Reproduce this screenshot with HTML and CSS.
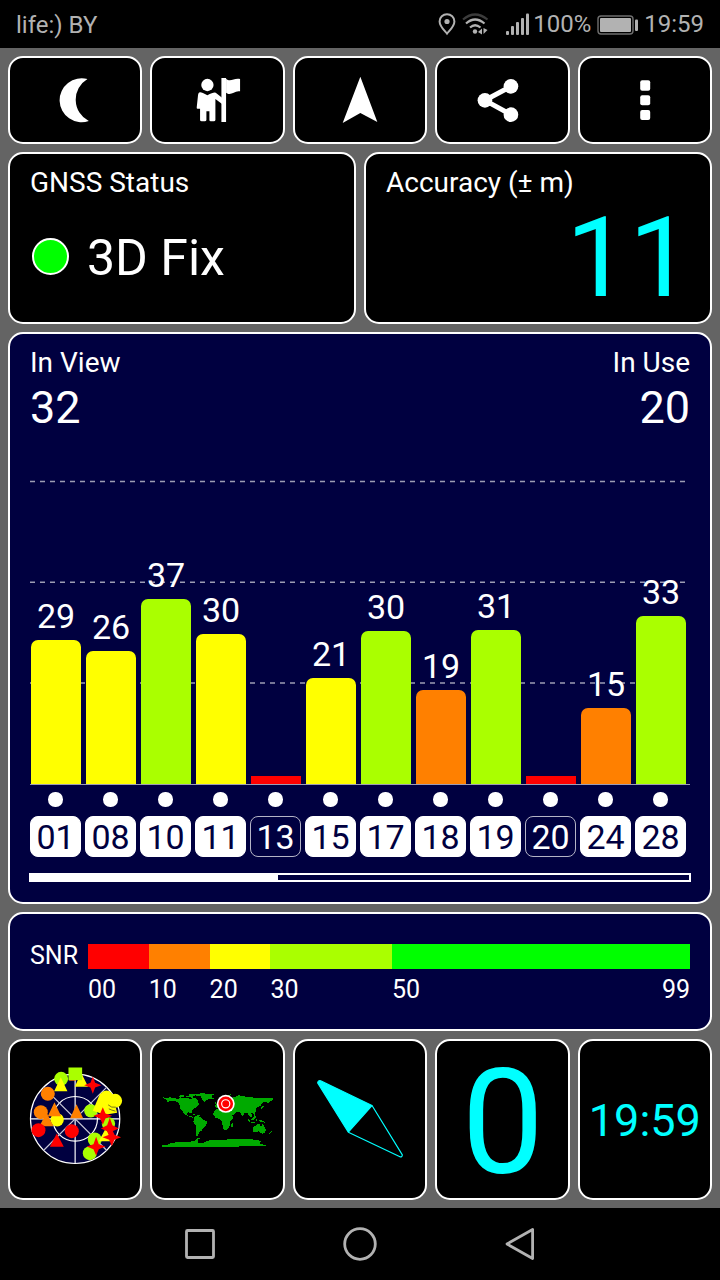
FILE: index.html
```
<!DOCTYPE html>
<html lang="en">

<head>
    <meta charset="UTF-8">
    <meta name="viewport" content="width=device-width, initial-scale=1.0">
    <title>GNSS Status</title>
    <link rel="stylesheet" href="styles.css">
</head>

<body>
    <!-- Status bar -->
    <header class="status-bar">
        <span class="carrier">life:) BY</span>
        <div class="status-icons">
            <svg class="icon-pin" viewBox="0 0 18 24">
                <path d="M9 2.2C5 2.2 1.6 5.2 1.6 9.4C1.6 14 5.5 17.5 9 21.6C12.5 17.5 16.4 14 16.4 9.4C16.4 5.2 13 2.2 9 2.2Z" fill="none" stroke="#b2b2b2" stroke-width="2" />
                <circle cx="9" cy="9.5" r="2.6" fill="#b2b2b2" />
            </svg>
            <svg class="icon-wifi" viewBox="0 0 27 24" fill="none" stroke-width="2.2">
                <path d="M1 7.5Q13 -2.5 25.5 7.5" stroke="#3c3c3c" />
                <path d="M4 11.5Q13 3.5 22.5 11.5" stroke="#b2b2b2" />
                <path d="M8 15.5Q13 11 18.5 15.5" stroke="#b2b2b2" />
                <circle cx="13" cy="19.5" r="2.2" fill="#b2b2b2" />
                <path d="M16 20l4-3.500v6M21.500 16v6l4-4z" fill="#b2b2b2" />
            </svg>
            <svg class="icon-signal" viewBox="0 0 24 24" fill="#b2b2b2">
                <rect x="0" y="18" width="3" height="4" rx="1" />
                <rect x="5" y="13" width="3" height="9" rx="1" />
                <rect x="10" y="9" width="3" height="13" rx="1" />
                <rect x="15" y="5" width="3" height="17" rx="1" />
                <rect x="20" y="0.5" width="3" height="21.5" rx="1" />
            </svg>
            <span class="battery-text">100%</span>
            <svg class="icon-battery" viewBox="0 0 42 20">
                <rect x="1" y="1" width="35" height="18" rx="3" fill="none" stroke="#6e6e6e" stroke-width="1.4" />
                <rect x="3" y="3" width="31" height="14" rx="1" fill="#b2b2b2" />
                <rect x="38" y="4.5" width="3" height="11.5" rx="1" fill="#b2b2b2" />
            </svg>
            <span class="clock">19:59</span>
        </div>
    </header>

    <main class="screen">
        <!-- Toolbar -->
        <nav class="row toolbar">
            <a class="card">
                <svg class="tool-icon" viewBox="133.6 209 180 180">
                    <path d="M261 236A66 66 0 1 0 265 362A72 72 0 0 1 261 236Z" />
                </svg>
            </a>
            <a class="card">
                <svg class="tool-icon" viewBox="562.8 210 180 180">
                    <circle cx="621" cy="255" r="18.500" />
                    <path d="M663 234H677V366H663Z" />
                    <path d="M677 236C690 248 702 232 719 237V274C702 270 692 290 677 278Z" />
                    <path d="M598 277Q602 275 621 286Q640 275 646 278L665 293V312L645 297V360Q645 364 640 364H631Q627 364 627 360V334H618V360Q618 364 613 364H604Q599 364 599 360V326H591Q588 326 589 322L593 284Q594 278 598 277Z" />
                </svg>
            </a>
            <a class="card">
                <svg class="tool-icon" viewBox="120 66 180 180">
                    <path d="M211 86L262 222L211 195L158 225Z" />
                </svg>
            </a>
            <a class="card">
                <svg class="tool-icon" viewBox="547.2 66 180 180">
                    <path d="M664 115L586 157L664 200" fill="none" stroke="#fff" stroke-width="15" />
                    <circle cx="586" cy="157" r="22" />
                    <circle cx="664" cy="115" r="22" />
                    <circle cx="664" cy="200" r="22" />
                </svg>
            </a>
            <a class="card">
                <svg class="tool-icon" viewBox="974.4 66 180 180">
                    <rect x="1050" y="97" width="30" height="31" rx="6" />
                    <rect x="1050" y="142" width="30" height="30" rx="6" />
                    <rect x="1050" y="186" width="30" height="30" rx="6" />
                </svg>
            </a>
        </nav>

        <!-- Fix and accuracy -->
        <section class="row summary">
            <div class="card">
                <h2 class="label">GNSS Status</h2>
                <div class="fix">
                    <span class="fix-light"></span>
                    <span class="fix-text">3D Fix</span>
                </div>
            </div>
            <div class="card">
                <h2 class="label">Accuracy (± m)</h2>
                <div class="accuracy">11</div>
            </div>
        </section>

        <!-- Satellite signal chart -->
        <section class="card satellites">
            <div class="counts">
                <div>
                    <h2 class="label">In View</h2>
                    <div class="count">32</div>
                </div>
                <div class="in-use">
                    <h2 class="label">In Use</h2>
                    <div class="count">20</div>
                </div>
            </div>
            <div class="chart">
                <svg class="grid-lines" viewBox="0 0 660 349" stroke="#9c9cb4" stroke-width="1.5" stroke-dasharray="5 5">
                    <path d="M0 46.4H656M0 147.200H656M0 248H656" />
                </svg>
                <div class="col"><span>29</span><div class="bar yellow" style="height: 144px"></div></div>
                <div class="col"><span>26</span><div class="bar yellow" style="height: 133px"></div></div>
                <div class="col"><span>37</span><div class="bar lime" style="height: 185px"></div></div>
                <div class="col"><span>30</span><div class="bar yellow" style="height: 150px"></div></div>
                <div class="col"><div class="bar none" style="height: 7.5px"></div></div>
                <div class="col"><span>21</span><div class="bar yellow" style="height: 106px"></div></div>
                <div class="col"><span>30</span><div class="bar lime" style="height: 153px"></div></div>
                <div class="col"><span>19</span><div class="bar orange" style="height: 94px"></div></div>
                <div class="col"><span>31</span><div class="bar lime" style="height: 154px"></div></div>
                <div class="col"><div class="bar none" style="height: 7.5px"></div></div>
                <div class="col"><span>15</span><div class="bar orange" style="height: 76px"></div></div>
                <div class="col"><span>33</span><div class="bar lime" style="height: 168px"></div></div>
            </div>
            <ul class="sat-ids">
                <li><b>01</b></li>
                <li><b>08</b></li>
                <li><b>10</b></li>
                <li><b>11</b></li>
                <li><b class="unused">13</b></li>
                <li><b>15</b></li>
                <li><b>17</b></li>
                <li><b>18</b></li>
                <li><b>19</b></li>
                <li><b class="unused">20</b></li>
                <li><b>24</b></li>
                <li><b>28</b></li>
            </ul>
            <div class="scroll-track"><div class="scroll-thumb"></div></div>
        </section>

        <!-- SNR legend -->
        <section class="card snr">
            <span class="snr-title">SNR</span>
            <div class="snr-scale">
                <i class="none"></i>
                <i class="orange"></i>
                <i class="yellow"></i>
                <i class="lime"></i>
                <i class="green"></i>
                <span>00</span>
                <span>10</span>
                <span>20</span>
                <span>30</span>
                <span class="last"><span>50</span><span>99</span></span>
            </div>
        </section>

        <!-- Page tiles -->
        <section class="row tiles">
            <a class="card">
                <svg width="110" height="110" viewBox="0.6 13.5 330 330">
                    <circle cx="166" cy="178" r="134" fill="#000040" />
                    <g fill="none" stroke="#fff" stroke-width="3.5">
                        <circle cx="166" cy="178" r="134" />
                        <circle cx="166" cy="178" r="67" />
                        <path d="M32 178H300M166 44V312" />
                        <path d="M71 83L261 273M261 83L71 273" stroke="#c8c8d8" />
                    </g>
                    <g fill="#aaff00">
                        <circle cx="124" cy="58" r="21" />
                        <circle cx="213" cy="154" r="20" />
                        <circle cx="266" cy="193" r="20" />
                        <circle cx="225" cy="240" r="21" />
                        <circle cx="210" cy="281" r="21" />
                    </g>
                    <g fill="#ff0">
                        <circle cx="112" cy="181" r="20" />
                        <path d="M123 53l20 42h-40zM184 40l21 42h-40zM258 206l20 39h-41z" />
                        <circle cx="260" cy="113" r="20" />
                        <circle cx="286" cy="124" r="21" />
                        <path d="M241 102L281 118L292 160L255 166L219 154Z" />
                    </g>
                    <path d="M265 136q10 10 23 7M267 148q8 4 20 7" stroke="#333320" stroke-width="2" fill="none" />
                    <rect x="146" y="24" width="41" height="38" fill="#aaff00" />
                    <g fill="#ff8000">
                        <circle cx="84" cy="103" r="21" />
                        <circle cx="63" cy="158" r="21" />
                        <path d="M104 128l20 42H84zM80 159l21 41H59zM170 134l20 42h-39z" />
                        <rect x="148" y="62" width="20" height="2" />
                    </g>
                    <g fill="#f00">
                        <circle cx="56" cy="212" r="21" />
                        <circle cx="156" cy="215" r="21" />
                        <path d="M111 222l21 40H90z" />
                        <path d="M219 51l7 19 19 7-19 7-7 19-7-19-19-7 19-7z" />
                        <path d="M249 143l8 19 20 7-20 8-8 19-8-19-20-8 20-7z" />
                        <path d="M270 175l8 22 19 10-19 8-8 19-8-19-19-8 19-10z" />
                        <path d="M276 207l8 19 20 7-20 8-8 19-8-19-20-8 20-7z" />
                        <path d="M229 232l8 22 20 7-20 8-8 19-8-19-20-8 20-7z" />
                    </g>
                </svg>
            </a>
            <a class="card">
                <svg width="130" height="77" viewBox="7.8 3 390 231">
                    <g fill="#00aa00" shape-rendering="crispEdges">
                        <!-- North America -->
                        <path d="M36 52L42 52L42 55L60 52L80 56L110 54L128 58L134 54L142 62L146 72L140 80L130 86L126 92L126 100L122 98L112 97L108 103L114 107L122 108L128 114L118 110L106 105L99 100L96 92L90 88L88 78L84 68L76 64L62 62L50 66L50 60Z" />
                        <path d="M84 48l8-3 8 1v4l-9 3zM105 47h12l-3 5h-7zM117 42l22-1-6 6-9 4 8 5 8 3-8 4-10-10-9-3zM123 102h9l6 3-6 1zM139 105h9v3h-9z" />
                        <!-- Greenland -->
                        <path d="M133 43l18-3 27 1 15 2-7 3-3 9-12 4-9 7-8-8-2-9-18-3z" />
                        <!-- South America -->
                        <path d="M131 110L142 108L152 112L158 119L170 124L168 134L160 143L154 151L148 156L144 164L140 168L136 166L136 152L138 140L132 132L129 124Z" />
                        <path d="M144 174h6v3h-9v6h-3v-6zM136 183h6v5h-6z" />
                        <!-- Europe and Asia -->
                        <path d="M196 84L194 76L200 72L202 66L210 58L222 52L236 56L250 52L262 48L280 49L296 52L320 53L345 54L368 54L369 61L360 62L354 70L345 66L334 68L332 76L322 82L316 84L318 94L310 100L302 100L306 108L300 112L296 106L290 98L282 100L277 109L271 100L264 95L258 96L252 104L242 108L236 98L230 90L222 88L214 84Z" />
                        <path d="M193 66h5v6l3 5-7 1 2-5zM183 55h9v3h-9zM232 46l9-3v3l-7 5zM262 44h8v3h-8zM330 85l6-6 2-7 2 9-8 7z" />
                        <!-- Africa -->
                        <path d="M190 94L198 88L214 89L226 91L236 93L242 106L250 107L247 116L240 124L240 134L234 144L228 150L220 150L217 138L214 124L206 116L196 114L189 104Z" />
                        <path d="M243 131l6-3v7l-4 8-4-3z" />
                        <!-- Islands and Australia -->
                        <path d="M290 115l5 2 7 10-5-1zM302 125h11v3h-11zM304 114l8-5 1 6-4 7-6-2zM317 116h4v8h-5zM309 100h5v7l5 4-4 3-5-8zM325 119l12 3 7 6-8-1-10-3z" />
                        <path d="M307 142l8-5 7-5 7 1v5l5 1 2-7 6 8 5 9-3 8-7 5-8-5-5-3-14 3-3-5z" />
                        <path d="M361 151l5 4-3 2zM358 157h4l-3 5h-4z" />
                        <!-- Antarctica -->
                        <path d="M36 201v-6h15l11-6 15-2 9-2 24 1 15-2 10-3 6-5 3 3-5 8 17 3 11-6 15-4 20-1 20 1 18-3 21 1 15-2 30 2 18 3 9 4-6 5 15 5h6v4z" />
                    </g>
                    <circle cx="226" cy="71.5" r="27" fill="#fff" />
                    <circle cx="226" cy="71.5" r="18" fill="#fff" stroke="#f00" stroke-width="8" />
                    <circle cx="226" cy="71.5" r="10.5" fill="#f00" />
                </svg>
            </a>
            <a class="card">
                <svg width="120" height="120" viewBox="30 58.5 360 360" stroke="#0ff" stroke-width="3.5" stroke-linejoin="round">
                    <path d="M83 130Q84 122 92 124L246 198L175 278Z" fill="#0ff" />
                    <path d="M246 198L337 346Q337 353 330 352L175 278" fill="none" />
                </svg>
            </a>
            <a class="card"><span class="speed">0</span></a>
            <a class="card"><span class="time">19:59</span></a>
        </section>
    </main>

    <!-- System navigation -->
    <footer class="nav-bar">
        <svg viewBox="0 0 40 40"><rect x="6.5" y="6.5" width="27" height="27" rx="1" /></svg>
        <svg viewBox="0 0 40 40"><circle cx="20" cy="20" r="15.3" /></svg>
        <svg viewBox="0 0 40 40"><path d="M32.6 5.5V34.5L7 20Z" /></svg>
    </footer>
</body>

</html>
```
FILE: styles.css
```
/* Global Styles */

* {
    box-sizing: border-box;
    margin: 0;
    padding: 0;
}

body {
    width: 720px;
    height: 1280px;
    background-color: #000000;
    color: #ffffff;
    font-family: Roboto, sans-serif;
    display: flex;
    flex-direction: column;
    overflow: hidden;
}

svg {
    display: block;
    flex-shrink: 0;
}

/* Status Bar */

.status-bar {
    height: 48px;
    padding: 0 16px;
    display: flex;
    justify-content: space-between;
    color: #b2b2b2;
    font-size: 24px;
    line-height: 50px;
}

.status-icons {
    display: flex;
    align-items: center;
}

.icon-pin {
    width: 18px;
    height: 24px;
}

.icon-wifi {
    width: 27px;
    height: 24px;
    margin-left: 6px;
}

.icon-signal {
    width: 24px;
    height: 24px;
    margin: 2px 3px 0 17px;
}

.icon-battery {
    width: 42px;
    height: 20px;
    margin: 1px 5px 0 6px;
}

/* Cards */

.screen {
    height: 1160px;
    padding: 8px;
    background-color: #646464;
    display: flex;
    flex-direction: column;
    gap: 8px;
}

.row {
    display: flex;
    gap: 8px;
}

.row .card {
    flex: 1;
    min-width: 0;
}

.card {
    background-color: #000000;
    border: 2px solid #ffffff;
    border-radius: 15px;
}

.label {
    font-size: 28px;
    font-weight: normal;
    line-height: 33px;
}

.toolbar {
    height: 88px;
}

.toolbar .card,
.tiles .card {
    display: flex;
    justify-content: center;
    align-items: center;
}

.tool-icon {
    width: 60px;
    height: 60px;
    fill: #ffffff;
}

.summary {
    height: 171.6px;
}

.summary .card {
    padding: 12px 20px 0;
}

.fix {
    margin-top: 29px;
    display: flex;
    align-items: center;
    gap: 18px;
}

.fix-light {
    width: 37px;
    height: 37px;
    margin: 0 0 4px 2px;
    background-color: #00ff00;
    border: 2px solid #ffffff;
    border-radius: 50%;
}

.fix-text {
    font-size: 50px;
    line-height: 60px;
}

.accuracy {
    margin: 9px -2px 0 0;
    color: #00ffff;
    font-size: 112px;
    line-height: 100px;
    text-align: right;
}

/* Satellites */

.satellites,
.snr {
    background-color: #000040;
}

.satellites {
    height: 572.4px;
    padding: 12px 20px 0;
}

.counts {
    display: flex;
    justify-content: space-between;
}

.in-use {
    text-align: right;
}

.count {
    margin-top: 2px;
    font-size: 45px;
    line-height: 54px;
}

.chart {
    position: relative;
    height: 350.4px;
    padding-left: 1px;
    border-bottom: 1px solid #9c9cb4;
    display: flex;
    align-items: flex-end;
    gap: 5px;
}

.grid-lines {
    position: absolute;
    left: 0;
    top: 0;
    width: 660px;
    height: 349px;
}

.col {
    position: relative;
    width: 50px;
    text-align: center;
    font-size: 34px;
    line-height: 41px;
}

.col span {
    display: block;
    margin-bottom: 2.5px;
}

.bar {
    border-radius: 7px 7px 0 0;
}

.bar.none {
    border-radius: 0;
}

.none {
    background-color: #ff0000;
}

.orange {
    background-color: #ff8000;
}

.yellow {
    background-color: #ffff00;
}

.lime {
    background-color: #aaff00;
}

.green {
    background-color: #00ff00;
}

.sat-ids {
    list-style: none;
    margin-top: 7.5px;
    display: flex;
    gap: 4px;
}

.sat-ids li {
    width: 51px;
}

.sat-ids li::before {
    content: "";
    display: block;
    width: 14.4px;
    height: 14.4px;
    margin: 0 auto 9.6px;
    background-color: #ffffff;
    border-radius: 50%;
}

.sat-ids b {
    display: block;
    height: 41px;
    background-color: #ffffff;
    border: 1px solid #ffffff;
    border-radius: 8px;
    color: #000040;
    font-size: 34px;
    font-weight: normal;
    line-height: 40px;
    text-align: center;
}

.sat-ids .unused {
    background-color: #000040;
    border-color: #b4b4c6;
    color: #ffffff;
}

.scroll-track {
    height: 9px;
    margin: 16px -1px 0;
    border: 2px solid #ffffff;
}

.scroll-thumb {
    width: 247px;
    height: 5px;
    background-color: #ffffff;
}

/* SNR Legend */

.snr {
    height: 119px;
    padding: 30.5px 20px 0;
    display: flex;
    font-size: 25px;
}

.snr-title {
    width: 58px;
    line-height: 24px;
}

.snr-scale {
    flex: 1;
    display: grid;
    grid-template-columns: 10fr 10fr 10fr 20fr 49fr;
    grid-template-rows: 24.5px 29px;
    row-gap: 6px;
    line-height: 30px;
}

.last {
    display: flex;
    justify-content: space-between;
}

/* Tiles */

.tiles {
    height: 161px;
    color: #00ffff;
}

.speed {
    font-size: 147px;
    line-height: 140px;
    margin-top: 7px;
    margin-left: 1px;
}

.time {
    font-size: 45px;
    line-height: 50px;
    margin-top: 4px;
}

/* Navigation Bar */

.nav-bar {
    height: 72px;
    display: flex;
    justify-content: center;
    align-items: center;
    gap: 120px;
}

.nav-bar svg {
    width: 40px;
    height: 40px;
    fill: none;
    stroke: #b2b2b2;
    stroke-width: 2.8;
    stroke-linejoin: round;
}
```
